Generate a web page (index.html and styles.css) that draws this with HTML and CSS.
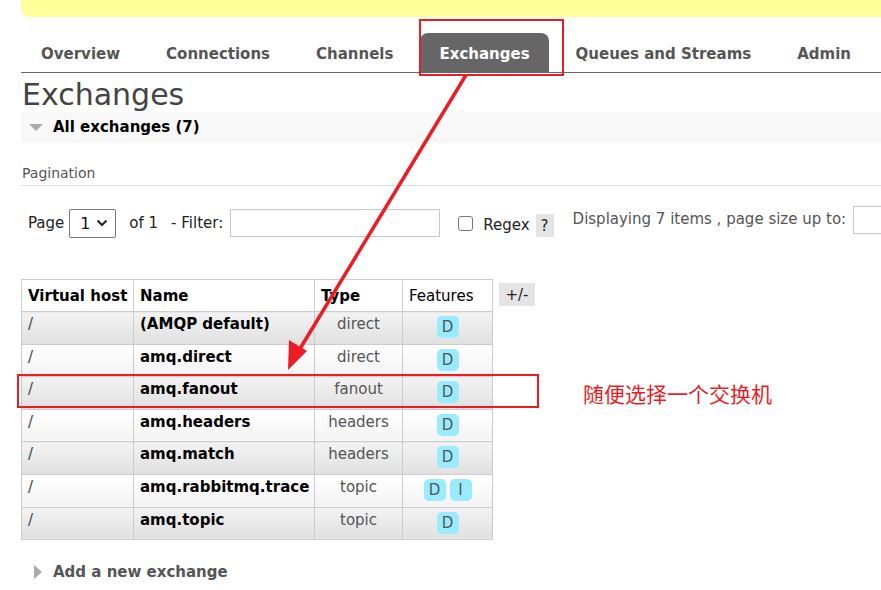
FILE: index.html
```html
<!DOCTYPE html>
<html>
<head>
<meta charset="utf-8">
<link rel="stylesheet" href="styles.css">
</head>
<body>
<div class="page">
  <div class="topbar"></div>
  <ul class="nav">
    <li class="tab">Overview</li>
    <li class="tab">Connections</li>
    <li class="tab">Channels</li>
    <li class="tab active">Exchanges</li>
    <li class="tab">Queues and Streams</li>
    <li class="tab">Admin</li>
  </ul>
  <h1 class="title">Exchanges</h1>
  <div class="section-head"><span class="tri-down"></span>All exchanges (7)</div>
  <div class="pag-label">Pagination</div>
  <div class="pag-row">
    <span class="lbl">Page</span>
    <span class="select">1<svg width="12" height="8" viewBox="0 0 12 8"><path d="M1.5 1.5 L6 6 L10.5 1.5" fill="none" stroke="#222" stroke-width="2"/></svg></span>
    <span class="lbl of">of 1</span>
    <span class="lbl filter">- Filter:</span>
    <span class="input"></span>
    <span class="checkbox"></span>
    <span class="lbl regex">Regex</span>
    <span class="help">?</span>
    <span class="lbl disp">Displaying 7 items , page size up to:</span>
    <span class="input small"></span>
  </div>
  <div class="table-wrap">
    <table class="list">
      <colgroup><col class="c1"><col class="c2"><col class="c3"><col class="c4"></colgroup>
      <thead>
        <tr><th>Virtual host</th><th>Name</th><th>Type</th><th class="plain">Features</th></tr>
      </thead>
      <tbody>
        <tr class="alt1"><td>/</td><td class="name">(AMQP default)</td><td class="type">direct</td><td class="feat"><span class="badge">D</span></td></tr>
        <tr class="alt2"><td>/</td><td class="name">amq.direct</td><td class="type">direct</td><td class="feat"><span class="badge">D</span></td></tr>
        <tr class="alt1"><td>/</td><td class="name">amq.fanout</td><td class="type">fanout</td><td class="feat"><span class="badge">D</span></td></tr>
        <tr class="alt2"><td>/</td><td class="name">amq.headers</td><td class="type">headers</td><td class="feat"><span class="badge">D</span></td></tr>
        <tr class="alt1"><td>/</td><td class="name">amq.match</td><td class="type">headers</td><td class="feat"><span class="badge">D</span></td></tr>
        <tr class="alt2"><td>/</td><td class="name">amq.rabbitmq.trace</td><td class="type">topic</td><td class="feat"><span class="badge">D</span><span class="badge">I</span></td></tr>
        <tr class="alt1"><td>/</td><td class="name">amq.topic</td><td class="type">topic</td><td class="feat"><span class="badge">D</span></td></tr>
      </tbody>
    </table>
    <span class="toggle">+/-</span>
  </div>
  <div class="add"><span class="tri-right"></span>Add a new exchange</div>
</div>

<div class="note">随便选择一个交换机</div>
<svg class="overlay" width="881" height="590" viewBox="0 0 881 590">
  <rect x="420" y="20" width="143" height="55" fill="none" stroke="#ec1c24" stroke-width="2"/>
  <rect x="18" y="375" width="520" height="32" fill="none" stroke="#ec1c24" stroke-width="2"/>
  <line x1="466" y1="75" x2="298" y2="352" stroke="#ec1c24" stroke-width="3.5"/>
  <polygon points="288,370 289,340 307,351" fill="#ec1c24"/>
</svg>
```

FILE: styles.css
```css
html, body {
  margin: 0;
  padding: 0;
  background: #fff;
}
body {
  font-family: "DejaVu Sans", Verdana, sans-serif;
  color: #444;
  width: 881px;
  height: 590px;
  overflow: hidden;
  position: relative;
}
.page {
  padding-left: 21px;
}
.topbar {
  height: 17px;
  background: #ffff99;
  border-bottom-left-radius: 8px;
}
.nav {
  list-style: none;
  margin: 16px 0 0 0;
  padding: 0 0 0 1px;
  display: flex;
  gap: 8px;
  border-bottom: 1px solid #666;
}
.tab {
  flex-shrink: 0;
  padding: 0 19px;
  height: 39px;
  line-height: 42px;
  font-size: 15px;
  font-weight: bold;
  color: #555;
  border-radius: 8px 8px 0 0;
  white-space: nowrap;
}
.tab.active {
  background: #666;
  color: #fff;
}
.title {
  margin: 4px 0 0 1px;
  font-size: 30px;
  font-weight: normal;
  line-height: 35px;
  color: #444;
}
.section-head {
  background: #f8f8f8;
  height: 31px;
  line-height: 31px;
  font-size: 15px;
  font-weight: bold;
  color: #000;
  display: flex;
  align-items: center;
}
.tri-down {
  width: 0;
  height: 0;
  border-left: 7px solid transparent;
  border-right: 7px solid transparent;
  border-top: 7px solid #aaa;
  margin: 0 10px 0 8px;
}
.pag-label {
  margin-top: 21px;
  font-size: 14px;
  line-height: 18px;
  color: #555;
  padding: 0 0 3px 1px;
  border-bottom: 1px solid #ddd;
}
.pag-row {
  display: flex;
  align-items: center;
  height: 30px;
  margin-top: 22px;
  padding-left: 7px;
  font-size: 15px;
  color: #222;
}
.pag-row > * {
  flex-shrink: 0;
}
.lbl {
  white-space: nowrap;
}
.select {
  display: inline-flex;
  align-items: center;
  justify-content: space-between;
  box-sizing: border-box;
  width: 47px;
  height: 29px;
  border: 1px solid #767676;
  border-radius: 2px;
  margin-left: 5px;
  padding: 0 7px 0 10px;
  font-size: 16px;
  color: #111;
}
.of { margin-left: 13px; }
.filter { margin-left: 13px; }
.input {
  box-sizing: border-box;
  width: 210px;
  height: 28px;
  border: 1px solid #c8c8c8;
  margin-left: 7px;
}
.checkbox {
  box-sizing: border-box;
  width: 15px;
  height: 15px;
  border: 1px solid #767676;
  border-radius: 3px;
  margin-left: 18px;
}
.regex { margin-left: 10px; position: relative; top: 2px; }
.help {
  width: 18px;
  height: 23px;
  line-height: 25px;
  text-align: center;
  background: #e4e4e4;
  margin-left: 6px;
  position: relative;
  top: 2px;
}
.disp {
  margin-left: 19px;
  color: #555;
  position: relative;
  top: -4px;
}
.input.small {
  width: 40px;
  margin-left: 7px;
  position: relative;
  top: -3px;
}
.table-wrap {
  margin-top: 41px;
  display: flex;
  align-items: flex-start;
}
.list {
  border-collapse: collapse;
  table-layout: fixed;
  width: 471px;
  font-size: 15px;
}
.c1 { width: 112px; }
.c2 { width: 181px; }
.c3 { width: 88px; }
.c4 { width: 90px; }
.list th, .list td {
  border: 1px solid #ccc;
  padding: 0 6px;
  text-align: left;
  white-space: nowrap;
  overflow: visible;
}
.list th {
  height: 28px;
  line-height: 30px;
  color: #000;
  background: #fff;
  padding-top: 1px;
}
.list th.plain { font-weight: normal; }
.list td {
  height: 32.6px;
  vertical-align: top;
  padding-top: 2px;
  padding-bottom: 0;
  box-sizing: border-box;
  line-height: 20px;
  color: #444;
}
.list td.name {
  font-weight: bold;
  color: #000;
}
.list td.type {
  text-align: center;
  color: #555;
}
.list td.feat {
  text-align: center;
  padding-top: 4px;
}
tr.alt1 td {
  background: linear-gradient(#f3f3f3, #e0e0e0);
}
tr.alt2 td {
  background: linear-gradient(#fff, #f3f3f3);
}
.badge {
  display: inline-block;
  width: 22px;
  height: 22px;
  line-height: 23px;
  border-radius: 5px;
  background: #99ebff;
  color: #555;
  font-size: 15px;
  text-align: center;
  margin: 0 2px;
}
.toggle {
  margin: 4px 0 0 6px;
  width: 36px;
  height: 23px;
  line-height: 24px;
  text-align: center;
  background: #e4e4e4;
  font-size: 15px;
  color: #222;
}
.add {
  margin-top: 21px;
  display: flex;
  align-items: center;
  font-size: 15px;
  font-weight: bold;
  color: #555;
  height: 22px;
}
.tri-right {
  width: 0;
  height: 0;
  border-top: 7px solid transparent;
  border-bottom: 7px solid transparent;
  border-left: 8px solid #aaa;
  margin: 0 11px 0 13px;
}
.note {
  position: absolute;
  left: 583px;
  top: 379px;
  font-family: "Noto Sans CJK SC", sans-serif;
  font-size: 21px;
  line-height: 28px;
  color: #ec1c24;
}
.overlay {
  position: absolute;
  left: 0;
  top: 0;
  pointer-events: none;
}
```
